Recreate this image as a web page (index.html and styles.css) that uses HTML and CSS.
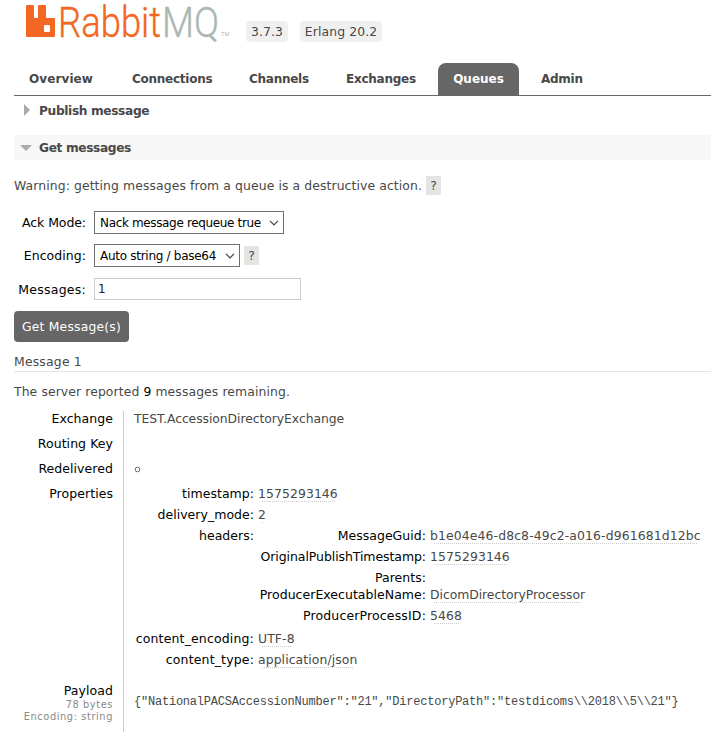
FILE: index.html
```html
<!DOCTYPE html>
<html lang="en">
<head>
<meta charset="utf-8">
<title>RabbitMQ Management</title>
<link rel="stylesheet" href="styles.css">
</head>
<body>
<header class="header">
  <svg class="logo" width="206" height="42" viewBox="0 0 206 42" role="img" aria-label="RabbitMQ">
    <path class="mark" fill-rule="evenodd" d="M2 5h6q1 0 1 1v11q0 1 1 1h2q1 0 1-1V6q0-1 1-1h6q1 0 1 1v11q0 1 1 1h7q1 0 1 1v17q0 1-1 1H2q-1 0-1-1V6q0-1 1-1zM20 25q-1 0-1 1v5q0 1 1 1h4q1 0 1-1v-5q0-1-1-1z"/>
    <text class="word rabbit" x="33" y="37" textLength="103" lengthAdjust="spacingAndGlyphs">Rabbit</text>
    <text class="word mq" x="137" y="37" textLength="57" lengthAdjust="spacingAndGlyphs">MQ</text>
    <text class="tm" x="196" y="36" textLength="8" lengthAdjust="spacingAndGlyphs">TM</text>
  </svg>
  <span class="version v1">3.7.3</span>
  <span class="version v2">Erlang 20.2</span>
</header>
<nav class="tabs">
  <a class="tab t1">Overview</a><a class="tab t2">Connections</a><a class="tab t3">Channels</a><a class="tab t4">Exchanges</a><a class="tab active">Queues</a><a class="tab">Admin</a>
</nav>
<main>
  <h2 class="section closed"><span class="arrow right"></span>Publish message</h2>
  <h2 class="section open"><span class="arrow down"></span>Get messages</h2>
  <p class="warning"><span>Warning: getting messages from a queue is a destructive action.</span><span class="help">?</span></p>
  <form class="form">
    <label class="ackl">Ack Mode:</label>
    <div class="field"><span class="select ack"><span>Nack message requeue true</span><svg width="10" height="6" viewBox="0 0 10 6"><path d="M1 .8l4 4 4-4"/></svg></span></div>
    <label>Encoding:</label>
    <div class="field"><span class="select enc"><span>Auto string / base64</span><svg width="10" height="6" viewBox="0 0 10 6"><path d="M1 .8l4 4 4-4"/></svg></span><span class="help">?</span></div>
    <label class="count">Messages:</label>
    <div class="field"><input type="text" value="1"></div>
  </form>
  <button class="button">Get Message(s)</button>
  <h3 class="message">Message 1</h3>
  <p class="remaining">The server reported <b>9</b> messages remaining.</p>
  <div class="facts">
    <div class="names">
      <div class="name">Exchange</div>
      <div class="name">Routing Key</div>
      <div class="name">Redelivered</div>
      <div class="name props">Properties</div>
      <div class="name payload">Payload</div>
      <small>78 bytes</small>
      <small>Encoding: string</small>
    </div>
    <div class="values">
      <div class="value exchange">TEST.AccessionDirectoryExchange</div>
      <div class="value"></div>
      <div class="value circle"><svg width="7" height="7"><circle cx="3.5" cy="3.5" r="2.3"/></svg></div>
      <div class="mini">
        <span>timestamp:</span><div><i>1575293146</i></div>
        <span>delivery_mode:</span><div><i>2</i></div>
        <span>headers:</span>
        <div class="mini nested">
          <span>MessageGuid:</span><div><i class="guid">b1e04e46-d8c8-49c2-a016-d961681d12bc</i></div>
          <span class="tight">OriginalPublishTimestamp:</span><div><i>1575293146</i></div>
          <span>Parents:</span><div></div>
          <span>ProducerExecutableName:</span><div><i class="name-value">DicomDirectoryProcessor</i></div>
          <span class="wide">ProducerProcessID:</span><div><i>5468</i></div>
        </div>
        <span class="wide">content_encoding:</span><div><i>UTF-8</i></div>
        <span class="wide">content_type:</span><div><i>application/json</i></div>
      </div>
      <pre>{"NationalPACSAccessionNumber":"21","DirectoryPath":"testdicoms\\2018\\5\\21"}</pre>
    </div>
  </div>
</main>
</body>
</html>
```
FILE: styles.css
```css
* { box-sizing: border-box; }
body { margin: 0; width: 711px; height: 733px; overflow: hidden; background: #fff; color: #484848; font: 12.4px/16px "DejaVu Sans", sans-serif; letter-spacing: .1px; }
h2, h3, p, pre { margin: 0; }
header, nav, main { margin-left: 14px; }
.header { display: flex; height: 63px; padding-left: 11px; }
.logo { flex: none; overflow: visible; letter-spacing: 0; }
.mark, .rabbit { fill: #f26822; }
.word { font: 43px Roboto, sans-serif; font-weight: 300; stroke-width: .4; }
.rabbit { stroke: #f26822; }
.mq { fill: #a9b7b0; stroke: #a9b7b0; }
.tm { font: 5px "Liberation Sans", sans-serif; fill: #a9b7b0; }
.version { height: 21px; margin-top: 21px; border-radius: 4px; background: #f0f0f0; line-height: 21px; text-align: center; white-space: nowrap; }
.v1 { width: 42px; margin-left: 15px; }
.v2 { width: 82px; margin-left: 12px; }
.tabs { display: flex; height: 33px; border-bottom: 1px solid #666; font-weight: bold; font-size: 12px; line-height: 33px; letter-spacing: -.26px; }
.tab { padding: 0 15px; white-space: nowrap; }
.t1 { width: 103px; letter-spacing: .1px; }
.t2 { width: 117px; }
.t3 { width: 97px; }
.t4 { width: 107px; }
.active { width: 81px; margin-right: 7px; padding: 0; text-align: center; border-radius: 8px 8px 0 0; background: #666; color: #fff; letter-spacing: 0; }
.section { display: flex; align-items: center; height: 25px; font-size: 12.2px; letter-spacing: -.36px; }
.closed { margin-top: 2px; }
.open { margin-top: 12px; background: #f7f7f7; }
.arrow { flex: none; }
.right { margin: 0 9px 2px 10px; border-left: 6px solid #aaa; border-top: 6px solid transparent; border-bottom: 6px solid transparent; }
.down { margin: 0 7px 0 6px; border-top: 6px solid #aaa; border-left: 6px solid transparent; border-right: 6px solid transparent; }
.warning { display: flex; align-items: center; height: 19px; margin-top: 16px; }
.help { width: 15px; height: 19px; margin-left: 4px; background: #e4e4e4; text-align: center; line-height: 19px; }
.form { display: grid; grid-template-columns: 72px 1fr; grid-template-rows: 33px 33px 32px; column-gap: 8px; margin-top: 11px; align-items: center; color: #000; }
.form label { text-align: right; font-size: 12.5px; letter-spacing: .05px; white-space: nowrap; }
.form .ackl { letter-spacing: -.08px; }
.form .count { padding-top: 4px; letter-spacing: .25px; }
.field { display: flex; align-items: center; color: #484848; }
.select { display: flex; align-items: center; justify-content: space-between; height: 23px; padding: 0 4px 0 5px; border: 1px solid #707070; color: #000; font-size: 12px; letter-spacing: -.35px; white-space: nowrap; }
.ack { width: 190px; }
.enc { width: 146px; letter-spacing: -.28px; }
.select path { fill: none; stroke: #444; stroke-width: 1.2; }
input { width: 207px; height: 22px; margin-top: 1px; padding: 0 3px; border: 1px solid #ccc; font: 12px "DejaVu Sans", sans-serif; color: #222; }
.button { display: block; width: 115px; height: 31px; margin-top: 7px; padding: 0; border: 0; border-radius: 4px; background: #666; color: #fff; font: 12.3px "DejaVu Sans", sans-serif; letter-spacing: .24px; white-space: nowrap; }
.message { height: 20px; margin-top: 10px; padding-top: 2px; border-bottom: 1px solid #e4e4e4; font-size: 12.4px; font-weight: normal; letter-spacing: .2px; }
.remaining { margin-top: 12px; }
.remaining b { font-weight: normal; color: #000; }
.facts { display: flex; height: 321px; margin-top: 11px; }
.names { width: 110px; padding-right: 10px; border-right: 1px solid #ccc; text-align: right; color: #000; font-size: 12.5px; letter-spacing: .06px; }
.name { height: 25px; }
.props { height: 197px; }
.payload { height: 16px; }
small { display: block; font-size: 9.8px; line-height: 12px; letter-spacing: .6px; color: #888; }
.values { padding-left: 10px; }
.value { height: 25px; }
.exchange { letter-spacing: -.07px; }
.circle { padding: 5px 0 0 0; line-height: 0; }
circle { fill: none; stroke: #666; stroke-width: 1; }
.mini { display: grid; grid-template-columns: 120px auto; grid-template-rows: 21px 21px 103px 21px 21px; column-gap: 4px; white-space: nowrap; }
.mini span { text-align: right; color: #000; font-size: 12.5px; letter-spacing: .03px; }
.mini .tight { letter-spacing: -.08px; }
.mini .wide { letter-spacing: .15px; }
.nested { grid-template-columns: 168px auto; grid-template-rows: 21px 21px 17px 21px 21px; }
i { display: inline-block; height: 16px; font-style: normal; background: repeating-linear-gradient(90deg, #ccc 0 1px, transparent 1px 2px) 4px 100% / calc(100% - 7px) 1px no-repeat; }
.guid { letter-spacing: .13px; }
.name-value { letter-spacing: -.05px; }
pre { margin-top: 21px; font: 12px/16px "Liberation Mono", monospace; letter-spacing: -.22px; }
```
